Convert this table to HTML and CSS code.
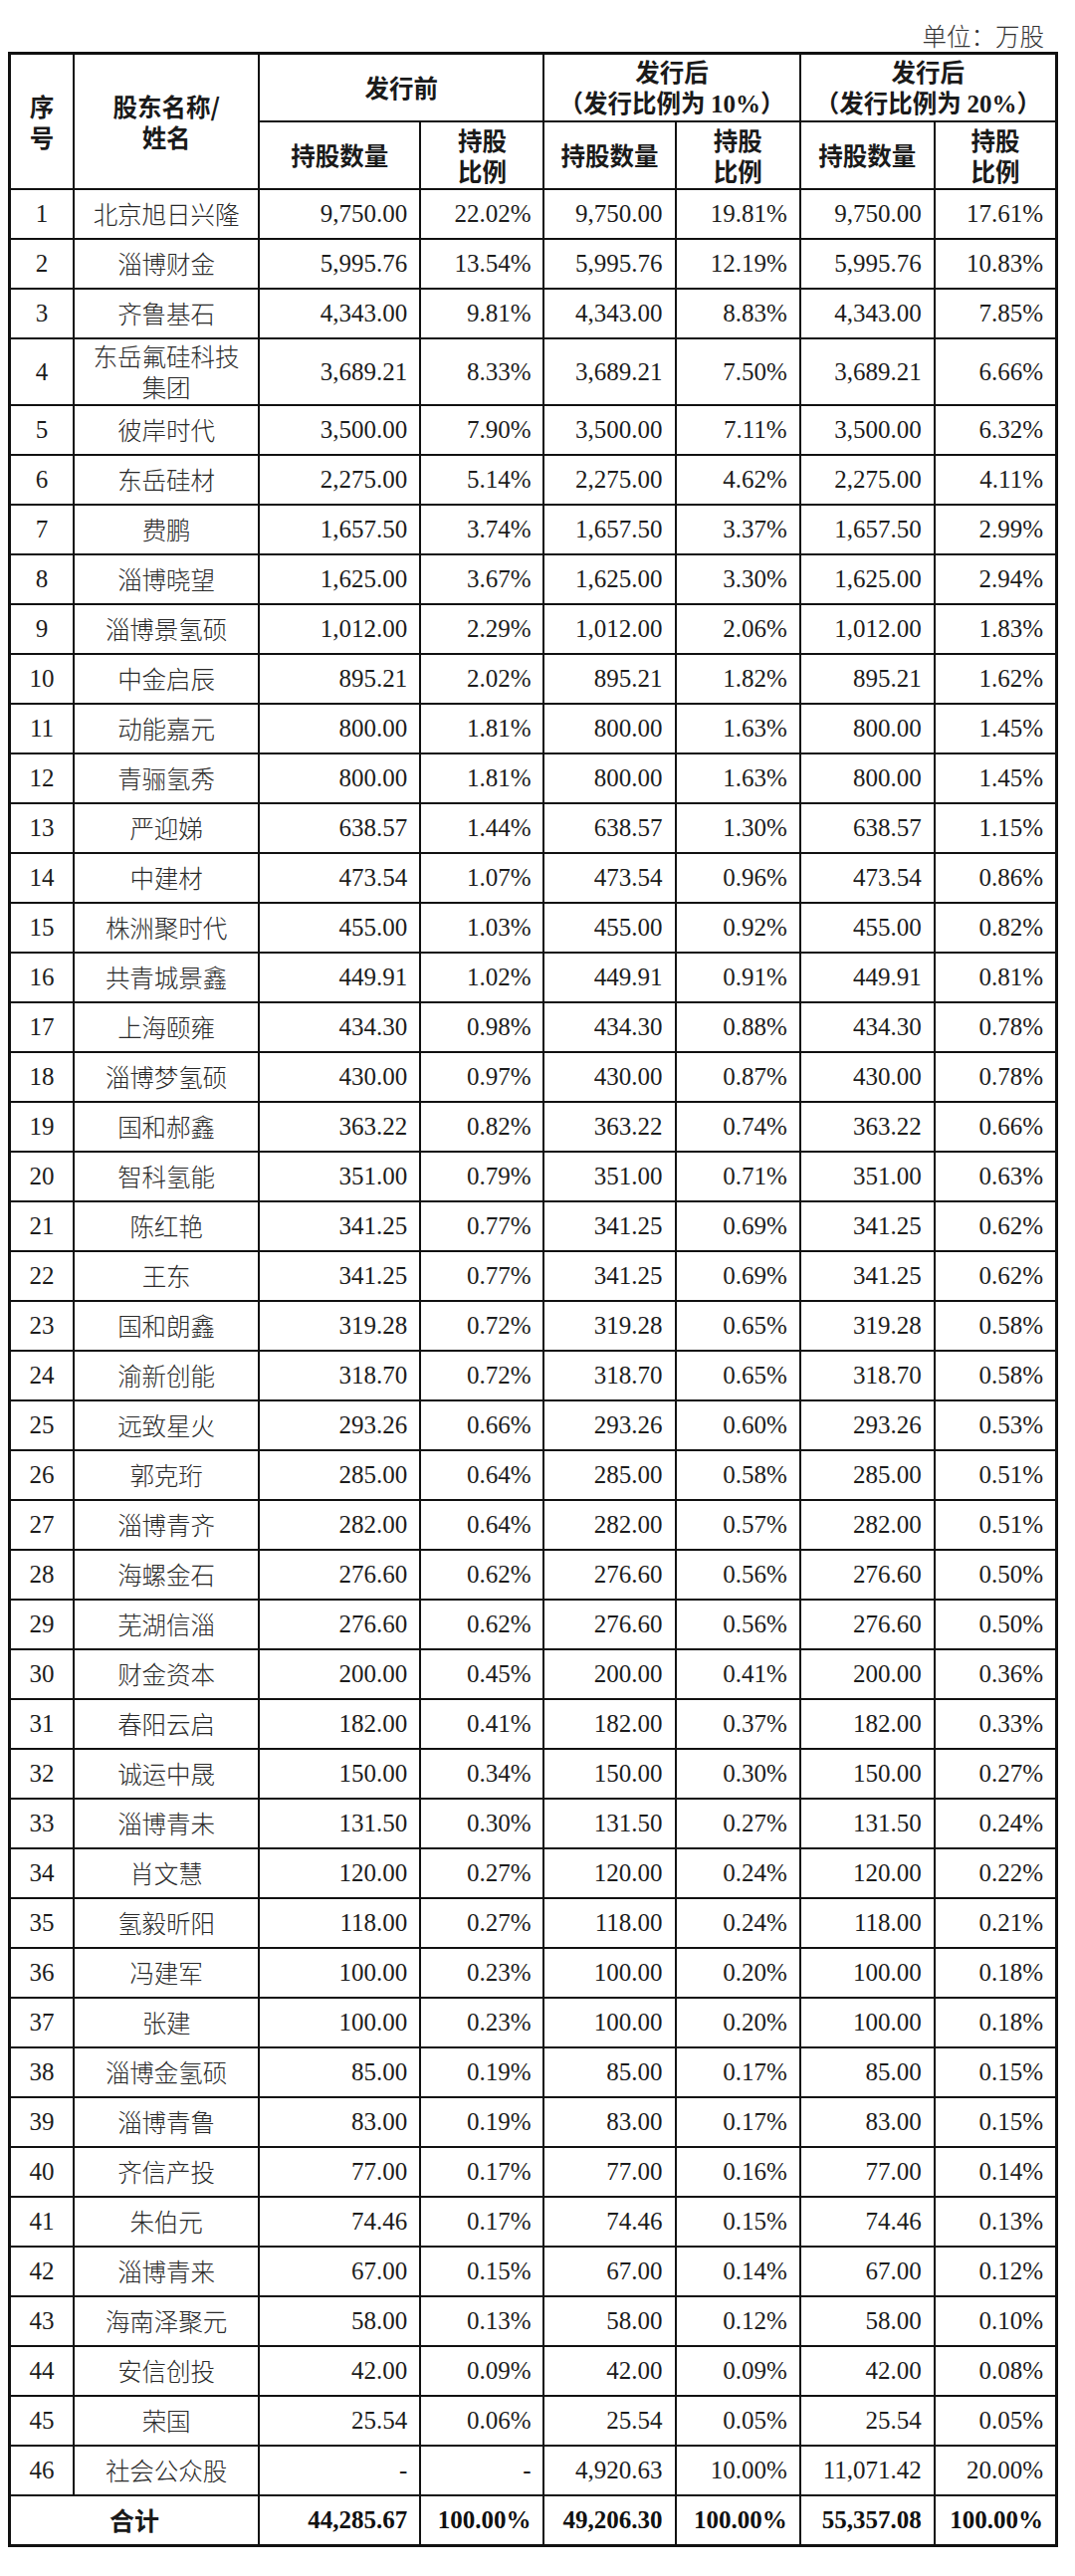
FILE: index.html
```html
<!DOCTYPE html>
<html lang="zh-CN">
<head>
<meta charset="utf-8">
<title>股东持股情况</title>
<link rel="stylesheet" href="styles.css">
</head>
<body>
<div class="page">
  <div class="unit">单位：万股</div>
  <table class="holdings">
    <colgroup>
      <col class="c-no"><col class="c-name"><col class="c-q1"><col class="c-p1"><col class="c-q2"><col class="c-p2"><col class="c-q3"><col class="c-p3">
    </colgroup>
    <thead>
      <tr class="h1">
        <th rowspan="2">序<br>号</th>
        <th rowspan="2">股东名称/<br>姓名</th>
        <th colspan="2">发行前</th>
        <th colspan="2">发行后<br>（发行比例为 <b class="num">10%</b>）</th>
        <th colspan="2">发行后<br>（发行比例为 <b class="num">20%</b>）</th>
      </tr>
      <tr class="h2">
        <th>持股数量</th><th>持股<br>比例</th>
        <th>持股数量</th><th>持股<br>比例</th>
        <th>持股数量</th><th>持股<br>比例</th>
      </tr>
    </thead>
    <tbody>
      <tr><td class="no">1</td><td class="name">北京旭日兴隆</td><td>9,750.00</td><td>22.02%</td><td>9,750.00</td><td>19.81%</td><td>9,750.00</td><td>17.61%</td></tr>
      <tr><td class="no">2</td><td class="name">淄博财金</td><td>5,995.76</td><td>13.54%</td><td>5,995.76</td><td>12.19%</td><td>5,995.76</td><td>10.83%</td></tr>
      <tr><td class="no">3</td><td class="name">齐鲁基石</td><td>4,343.00</td><td>9.81%</td><td>4,343.00</td><td>8.83%</td><td>4,343.00</td><td>7.85%</td></tr>
      <tr class="tall"><td class="no">4</td><td class="name">东岳氟硅科技<br>集团</td><td>3,689.21</td><td>8.33%</td><td>3,689.21</td><td>7.50%</td><td>3,689.21</td><td>6.66%</td></tr>
      <tr><td class="no">5</td><td class="name">彼岸时代</td><td>3,500.00</td><td>7.90%</td><td>3,500.00</td><td>7.11%</td><td>3,500.00</td><td>6.32%</td></tr>
      <tr><td class="no">6</td><td class="name">东岳硅材</td><td>2,275.00</td><td>5.14%</td><td>2,275.00</td><td>4.62%</td><td>2,275.00</td><td>4.11%</td></tr>
      <tr><td class="no">7</td><td class="name">费鹏</td><td>1,657.50</td><td>3.74%</td><td>1,657.50</td><td>3.37%</td><td>1,657.50</td><td>2.99%</td></tr>
      <tr><td class="no">8</td><td class="name">淄博晓望</td><td>1,625.00</td><td>3.67%</td><td>1,625.00</td><td>3.30%</td><td>1,625.00</td><td>2.94%</td></tr>
      <tr><td class="no">9</td><td class="name">淄博景氢硕</td><td>1,012.00</td><td>2.29%</td><td>1,012.00</td><td>2.06%</td><td>1,012.00</td><td>1.83%</td></tr>
      <tr><td class="no">10</td><td class="name">中金启辰</td><td>895.21</td><td>2.02%</td><td>895.21</td><td>1.82%</td><td>895.21</td><td>1.62%</td></tr>
      <tr><td class="no">11</td><td class="name">动能嘉元</td><td>800.00</td><td>1.81%</td><td>800.00</td><td>1.63%</td><td>800.00</td><td>1.45%</td></tr>
      <tr><td class="no">12</td><td class="name">青骊氢秀</td><td>800.00</td><td>1.81%</td><td>800.00</td><td>1.63%</td><td>800.00</td><td>1.45%</td></tr>
      <tr><td class="no">13</td><td class="name">严迎娣</td><td>638.57</td><td>1.44%</td><td>638.57</td><td>1.30%</td><td>638.57</td><td>1.15%</td></tr>
      <tr><td class="no">14</td><td class="name">中建材</td><td>473.54</td><td>1.07%</td><td>473.54</td><td>0.96%</td><td>473.54</td><td>0.86%</td></tr>
      <tr><td class="no">15</td><td class="name">株洲聚时代</td><td>455.00</td><td>1.03%</td><td>455.00</td><td>0.92%</td><td>455.00</td><td>0.82%</td></tr>
      <tr><td class="no">16</td><td class="name">共青城景鑫</td><td>449.91</td><td>1.02%</td><td>449.91</td><td>0.91%</td><td>449.91</td><td>0.81%</td></tr>
      <tr><td class="no">17</td><td class="name">上海颐雍</td><td>434.30</td><td>0.98%</td><td>434.30</td><td>0.88%</td><td>434.30</td><td>0.78%</td></tr>
      <tr><td class="no">18</td><td class="name">淄博梦氢硕</td><td>430.00</td><td>0.97%</td><td>430.00</td><td>0.87%</td><td>430.00</td><td>0.78%</td></tr>
      <tr><td class="no">19</td><td class="name">国和郝鑫</td><td>363.22</td><td>0.82%</td><td>363.22</td><td>0.74%</td><td>363.22</td><td>0.66%</td></tr>
      <tr><td class="no">20</td><td class="name">智科氢能</td><td>351.00</td><td>0.79%</td><td>351.00</td><td>0.71%</td><td>351.00</td><td>0.63%</td></tr>
      <tr><td class="no">21</td><td class="name">陈红艳</td><td>341.25</td><td>0.77%</td><td>341.25</td><td>0.69%</td><td>341.25</td><td>0.62%</td></tr>
      <tr><td class="no">22</td><td class="name">王东</td><td>341.25</td><td>0.77%</td><td>341.25</td><td>0.69%</td><td>341.25</td><td>0.62%</td></tr>
      <tr><td class="no">23</td><td class="name">国和朗鑫</td><td>319.28</td><td>0.72%</td><td>319.28</td><td>0.65%</td><td>319.28</td><td>0.58%</td></tr>
      <tr><td class="no">24</td><td class="name">渝新创能</td><td>318.70</td><td>0.72%</td><td>318.70</td><td>0.65%</td><td>318.70</td><td>0.58%</td></tr>
      <tr><td class="no">25</td><td class="name">远致星火</td><td>293.26</td><td>0.66%</td><td>293.26</td><td>0.60%</td><td>293.26</td><td>0.53%</td></tr>
      <tr><td class="no">26</td><td class="name">郭克珩</td><td>285.00</td><td>0.64%</td><td>285.00</td><td>0.58%</td><td>285.00</td><td>0.51%</td></tr>
      <tr><td class="no">27</td><td class="name">淄博青齐</td><td>282.00</td><td>0.64%</td><td>282.00</td><td>0.57%</td><td>282.00</td><td>0.51%</td></tr>
      <tr><td class="no">28</td><td class="name">海螺金石</td><td>276.60</td><td>0.62%</td><td>276.60</td><td>0.56%</td><td>276.60</td><td>0.50%</td></tr>
      <tr><td class="no">29</td><td class="name">芜湖信淄</td><td>276.60</td><td>0.62%</td><td>276.60</td><td>0.56%</td><td>276.60</td><td>0.50%</td></tr>
      <tr><td class="no">30</td><td class="name">财金资本</td><td>200.00</td><td>0.45%</td><td>200.00</td><td>0.41%</td><td>200.00</td><td>0.36%</td></tr>
      <tr><td class="no">31</td><td class="name">春阳云启</td><td>182.00</td><td>0.41%</td><td>182.00</td><td>0.37%</td><td>182.00</td><td>0.33%</td></tr>
      <tr><td class="no">32</td><td class="name">诚运中晟</td><td>150.00</td><td>0.34%</td><td>150.00</td><td>0.30%</td><td>150.00</td><td>0.27%</td></tr>
      <tr><td class="no">33</td><td class="name">淄博青未</td><td>131.50</td><td>0.30%</td><td>131.50</td><td>0.27%</td><td>131.50</td><td>0.24%</td></tr>
      <tr><td class="no">34</td><td class="name">肖文慧</td><td>120.00</td><td>0.27%</td><td>120.00</td><td>0.24%</td><td>120.00</td><td>0.22%</td></tr>
      <tr><td class="no">35</td><td class="name">氢毅昕阳</td><td>118.00</td><td>0.27%</td><td>118.00</td><td>0.24%</td><td>118.00</td><td>0.21%</td></tr>
      <tr><td class="no">36</td><td class="name">冯建军</td><td>100.00</td><td>0.23%</td><td>100.00</td><td>0.20%</td><td>100.00</td><td>0.18%</td></tr>
      <tr><td class="no">37</td><td class="name">张建</td><td>100.00</td><td>0.23%</td><td>100.00</td><td>0.20%</td><td>100.00</td><td>0.18%</td></tr>
      <tr><td class="no">38</td><td class="name">淄博金氢硕</td><td>85.00</td><td>0.19%</td><td>85.00</td><td>0.17%</td><td>85.00</td><td>0.15%</td></tr>
      <tr><td class="no">39</td><td class="name">淄博青鲁</td><td>83.00</td><td>0.19%</td><td>83.00</td><td>0.17%</td><td>83.00</td><td>0.15%</td></tr>
      <tr><td class="no">40</td><td class="name">齐信产投</td><td>77.00</td><td>0.17%</td><td>77.00</td><td>0.16%</td><td>77.00</td><td>0.14%</td></tr>
      <tr><td class="no">41</td><td class="name">朱伯元</td><td>74.46</td><td>0.17%</td><td>74.46</td><td>0.15%</td><td>74.46</td><td>0.13%</td></tr>
      <tr><td class="no">42</td><td class="name">淄博青来</td><td>67.00</td><td>0.15%</td><td>67.00</td><td>0.14%</td><td>67.00</td><td>0.12%</td></tr>
      <tr><td class="no">43</td><td class="name">海南泽聚元</td><td>58.00</td><td>0.13%</td><td>58.00</td><td>0.12%</td><td>58.00</td><td>0.10%</td></tr>
      <tr><td class="no">44</td><td class="name">安信创投</td><td>42.00</td><td>0.09%</td><td>42.00</td><td>0.09%</td><td>42.00</td><td>0.08%</td></tr>
      <tr><td class="no">45</td><td class="name">荣国</td><td>25.54</td><td>0.06%</td><td>25.54</td><td>0.05%</td><td>25.54</td><td>0.05%</td></tr>
      <tr><td class="no">46</td><td class="name">社会公众股</td><td>-</td><td>-</td><td>4,920.63</td><td>10.00%</td><td>11,071.42</td><td>20.00%</td></tr>
    </tbody>
    <tfoot>
      <tr class="total"><th colspan="2">合计</th><td>44,285.67</td><td>100.00%</td><td>49,206.30</td><td>100.00%</td><td>55,357.08</td><td>100.00%</td></tr>
    </tfoot>
  </table>
</div>
</body>
</html>
```

FILE: styles.css
```css
html, body {
  margin: 0;
  padding: 0;
  background: #ffffff;
}

.page {
  width: 1080px;
  padding: 0 0 0 8px;
  box-sizing: border-box;
  font-family: "Liberation Serif", "Noto Sans CJK SC", serif;
  color: #1c1c1c;
}

.unit {
  width: 1055px;
  height: 52px;
  box-sizing: border-box;
  padding: 21px 14px 0 0;
  line-height: 30px;
  text-align: right;
  font-family: "Noto Sans CJK SC", sans-serif;
  font-weight: 300;
  font-size: 24.5px;
  color: #333;
}

.holdings {
  width: 1055px;
  table-layout: fixed;
  border-collapse: collapse;
  border: 3.5px solid #111;
  font-size: 25px;
}

.c-no { width: 64.5px; }
.c-name { width: 186px; }
.c-q1 { width: 162px; }
.c-p1 { width: 124px; }
.c-q2 { width: 132px; }
.c-p2 { width: 125px; }
.c-q3 { width: 135px; }
.c-p3 { width: 122.5px; }

.holdings th,
.holdings td {
  border: 2px solid #111;
  padding: 0 12px 0 0;
  white-space: nowrap;
  overflow: visible;
}

.holdings th {
  font-family: "Noto Sans CJK SC", sans-serif;
  font-weight: 700;
  font-size: 24.5px;
  line-height: 31px;
  text-align: center;
  padding: 0;
  color: #1a1a1a;
}

.holdings th .num {
  font-family: "Liberation Serif", serif;
  font-weight: 700;
  font-size: 25px;
}

.h1 { height: 68px; }
.h2 { height: 68px; }

.holdings tbody tr { height: 50px; }
.holdings tbody tr.tall { height: 67px; }

.holdings td {
  text-align: right;
  line-height: 31px;
  vertical-align: middle;
}

.holdings td.no {
  text-align: center;
  padding: 0;
}

.holdings td.name {
  text-align: center;
  padding: 0;
  font-family: "Noto Sans CJK SC", sans-serif;
  font-weight: 300;
  font-size: 24.5px;
  color: #2a2a2a;
}

.total { height: 51px; }

.total td {
  font-weight: 700;
  color: #111;
}

.total th {
  font-size: 25px;
}
```
